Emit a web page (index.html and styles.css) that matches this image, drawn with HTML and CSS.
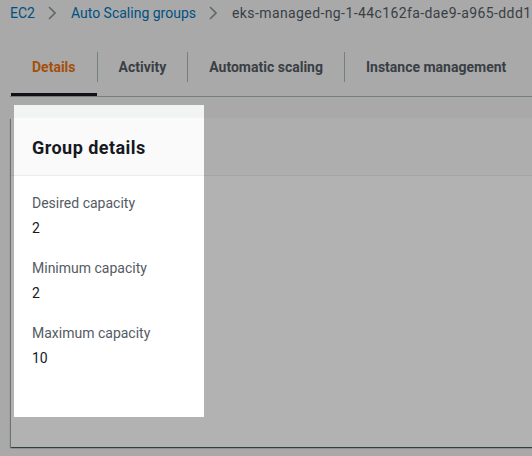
FILE: index.html
```html
<!DOCTYPE html>
<html lang="en">
<head>
<meta charset="utf-8">
<title>Auto Scaling group details</title>
<link rel="stylesheet" href="styles.css">
</head>
<body>
<div class="page">
  <nav class="breadcrumbs">
    <a class="crumb-link" href="#">EC2</a>
    <svg class="chevron" viewBox="0 0 8 16" width="8" height="16"><path d="M1 2 L7 8 L1 14" fill="none" stroke="currentColor" stroke-width="1.6"/></svg>
    <a class="crumb-link" href="#">Auto Scaling groups</a>
    <svg class="chevron" viewBox="0 0 8 16" width="8" height="16"><path d="M1 2 L7 8 L1 14" fill="none" stroke="currentColor" stroke-width="1.6"/></svg>
    <span class="crumb-current">eks-managed-ng-1-44c162fa-dae9-a965-ddd1</span>
  </nav>

  <div class="tabs">
    <div class="tab active">Details</div>
    <div class="tab-sep"></div>
    <div class="tab">Activity</div>
    <div class="tab-sep"></div>
    <div class="tab">Automatic scaling</div>
    <div class="tab-sep"></div>
    <div class="tab">Instance management</div>
  </div>

  <section class="card">
    <header class="card-header">
      <h2 class="card-title">Group details</h2>
    </header>
    <div class="card-body">
      <div class="field">
        <div class="field-label">Desired capacity</div>
        <div class="field-value">2</div>
      </div>
      <div class="field">
        <div class="field-label">Minimum capacity</div>
        <div class="field-value">2</div>
      </div>
      <div class="field">
        <div class="field-label">Maximum capacity</div>
        <div class="field-value">10</div>
      </div>
    </div>
  </section>

  <div class="spotlight"></div>
</div>
</body>
</html>
```

FILE: styles.css
```css
html, body {
  margin: 0;
  padding: 0;
}
body {
  background: #f2f3f3;
  font-family: Roboto, "Open Sans", "Liberation Sans", sans-serif;
  font-size: 14px;
  color: #16191f;
  overflow: hidden;
  width: 532px;
  height: 456px;
}
.page {
  position: relative;
  width: 532px;
  height: 456px;
  overflow: hidden;
}
.breadcrumbs {
  display: flex;
  align-items: center;
  white-space: nowrap;
  padding: 2px 0 0 10px;
  height: 22px;
  line-height: 22px;
}
.crumb-link {
  color: #0073bb;
  text-decoration: none;
}
.chevron {
  color: #879596;
  margin: 0 15px 0 13px;
  flex: none;
}
.crumb-current {
  color: #545b64;
  letter-spacing: 0.4px;
}
.tabs {
  display: flex;
  align-items: center;
  margin: 16px 0 0 10px;
  width: 700px;
  border-bottom: 1px solid #aab7b8;
  white-space: nowrap;
}
.tab {
  height: 56px;
  box-sizing: border-box;
  display: flex;
  align-items: center;
  padding: 0 21px;
  font-weight: 700;
  color: #545b64;
  border-bottom: 3px solid transparent;
}
.tab.active {
  color: #ec7211;
  border-bottom-color: #16191f;
  margin-left: 1px;
}
.tab-sep {
  width: 1px;
  height: 30px;
  background: #aab7b8;
  align-self: flex-start;
  margin-top: 12px;
}
.card {
  margin: 21px 0 0 11px;
  width: 700px;
  height: 329px;
  background: #ffffff;
  box-shadow: 0 1px 1px 0 rgba(0, 28, 36, 0.5), 1px 1px 1px 0 rgba(0, 28, 36, 0.15), -1px 1px 1px 0 rgba(0, 28, 36, 0.3);
}
.card-header {
  height: 58px;
  box-sizing: border-box;
  display: flex;
  align-items: center;
  padding: 3px 21px 0;
  background: #fafafa;
  border-bottom: 1px solid #eaeded;
}
.card-title {
  margin: 0;
  font-size: 18px;
  font-weight: 700;
  line-height: 22px;
  letter-spacing: 0.45px;
  color: #16191f;
}
.card-body {
  padding: 16px 21px 0;
  display: flex;
  flex-direction: column;
  gap: 18px;
}
.field-label {
  color: #545b64;
  line-height: 22px;
}
.field-value {
  color: #16191f;
  line-height: 22px;
  margin-top: 3px;
}
.spotlight {
  position: absolute;
  left: 14px;
  top: 105px;
  width: 190px;
  height: 312px;
  box-shadow: 0 0 0 2000px rgba(0, 0, 0, 0.3);
  pointer-events: none;
}
```
